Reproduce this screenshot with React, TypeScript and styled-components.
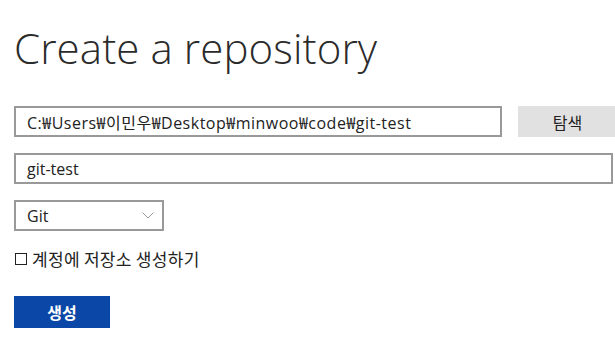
import styled, { createGlobalStyle } from "styled-components";

const GlobalStyle = createGlobalStyle`
  html, body {
    margin: 0;
    padding: 0;
    background: #ffffff;
    font-family: "Open Sans", "Noto Sans CJK KR", sans-serif;
    color: #222222;
  }
`;

const Page = styled.div`
  padding: 18px 2px 0 14px;
  display: flex;
  flex-direction: column;
`;

const Title = styled.h1`
  margin: 0 0 28px 0;
  font-weight: 300;
  font-size: 42px;
  line-height: 60px;
  color: #2b2b2b;
  letter-spacing: 0.1px;
`;

const Row = styled.div`
  display: flex;
  align-items: center;
  gap: 16px;
  margin-bottom: 16px;
`;

const TextBox = styled.div<{ $width?: number; $spacing?: number }>`
  box-sizing: border-box;
  height: 31px;
  width: ${(p) => (p.$width ? `${p.$width}px` : "100%")};
  border: 2px solid #999999;
  padding: 0 11px;
  display: flex;
  align-items: center;
  font-size: 16px;
  letter-spacing: ${(p) => p.$spacing ?? 0}px;
  color: #222222;
  font-family: "Open Sans", "Noto Sans CJK KR", sans-serif;
  white-space: nowrap;
  overflow: hidden;
`;

const GrayButton = styled.div`
  width: 99px;
  height: 31px;
  background: #e1e1e1;
  display: flex;
  align-items: center;
  justify-content: center;
  font-size: 16px;
  font-family: "Noto Sans CJK KR", sans-serif;
  color: #222222;
  margin-right: -4px;
  flex-shrink: 0;
`;

const SelectBox = styled(TextBox)`
  justify-content: space-between;
  padding: 0 8px 0 11px;
`;

const CheckRow = styled.label`
  display: flex;
  align-items: center;
  gap: 5px;
  margin: 0 0 25px 0;
  font-size: 17px;
  line-height: 24px;
  letter-spacing: 0.3px;
  font-family: "Noto Sans CJK KR", sans-serif;
  color: #222222;
`;

const Box = styled.span`
  box-sizing: border-box;
  width: 12px;
  height: 12px;
  border: 1px solid #222222;
  margin-left: 1px;
`;

const PrimaryButton = styled.div`
  width: 96px;
  height: 32px;
  background: #0b47a6;
  color: #ffffff;
  display: flex;
  align-items: center;
  justify-content: center;
  font-size: 16px;
  font-weight: 700;
  font-family: "Noto Sans CJK KR", sans-serif;
`;

const Chevron = () => (
  <svg width="12" height="7" viewBox="0 0 12 7">
    <path d="M0.5 0.5 L6 6 L11.5 0.5" fill="none" stroke="#9a9a9a" strokeWidth="1" />
  </svg>
);

export default function App() {
  return (
    <>
      <GlobalStyle />
      <Page>
        <Title>Create a repository</Title>
        <Row>
          <TextBox $width={488} $spacing={0.5}>
            C:₩Users₩이민우₩Desktop₩minwoo₩code₩git-test
          </TextBox>
          <GrayButton>탐색</GrayButton>
        </Row>
        <Row>
          <TextBox>git-test</TextBox>
        </Row>
        <Row>
          <SelectBox $width={150}>
            <span>Git</span>
            <Chevron />
          </SelectBox>
        </Row>
        <CheckRow>
          <Box />
          계정에 저장소 생성하기
        </CheckRow>
        <PrimaryButton>생성</PrimaryButton>
      </Page>
    </>
  );
}
